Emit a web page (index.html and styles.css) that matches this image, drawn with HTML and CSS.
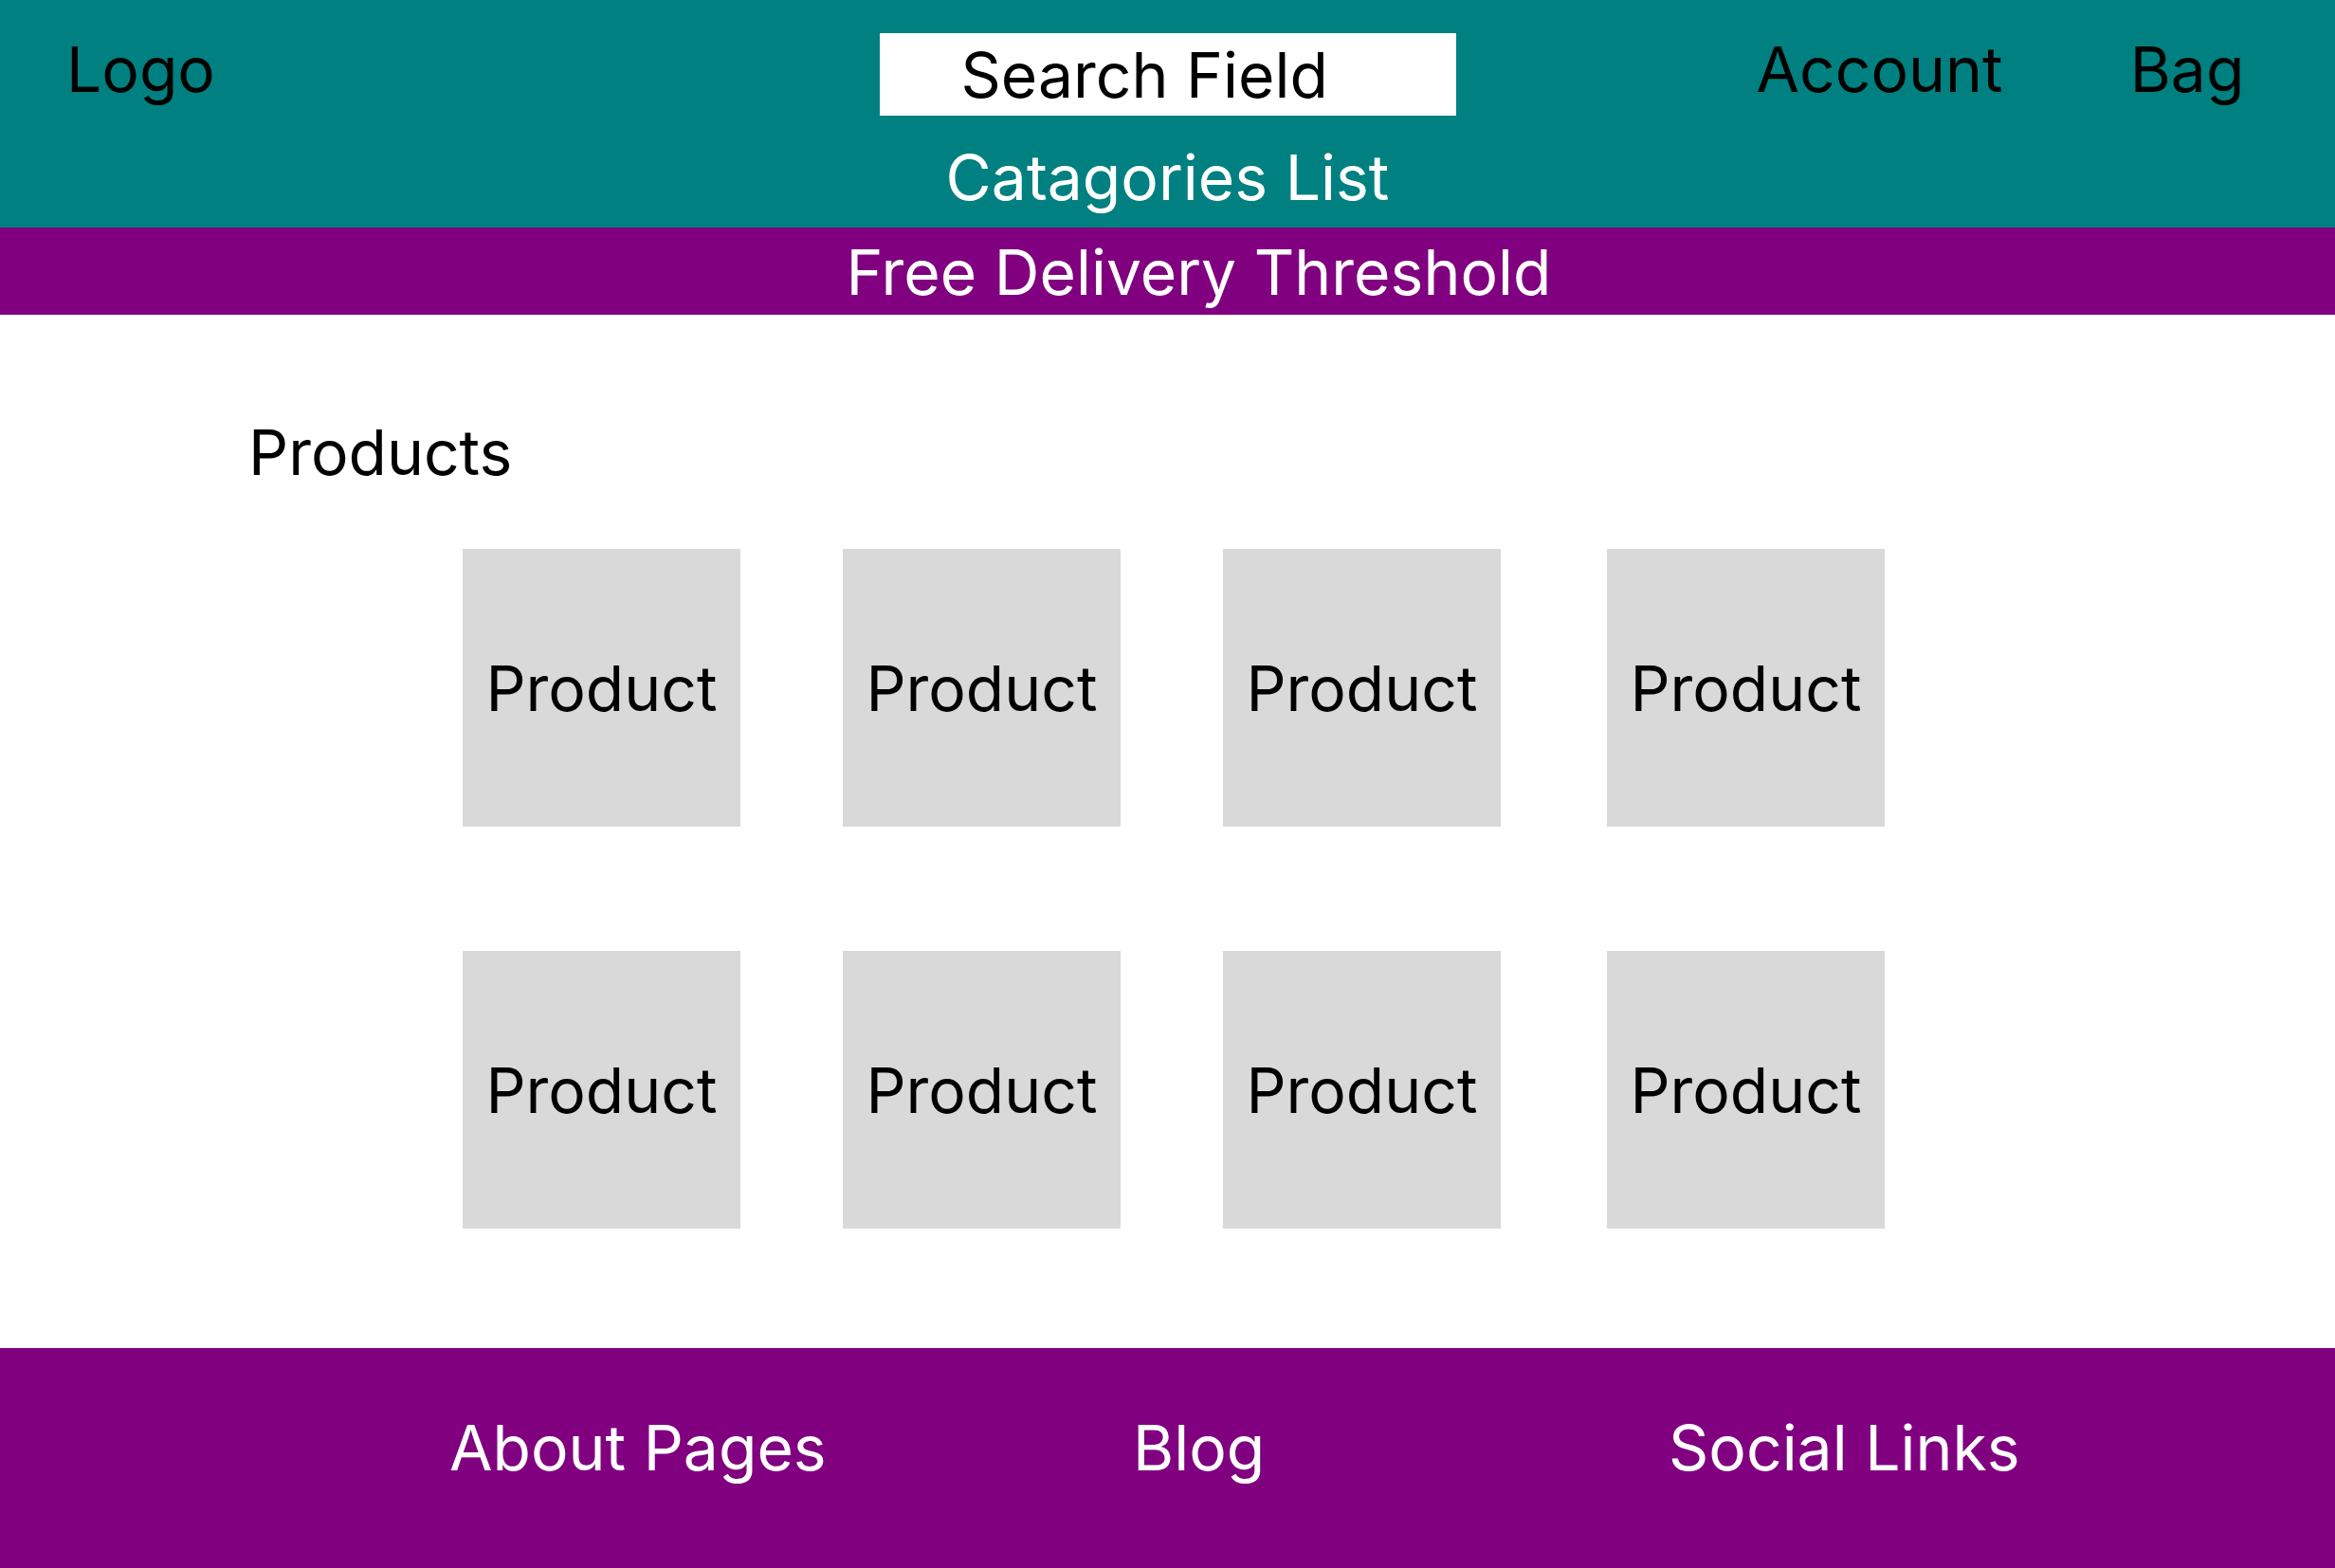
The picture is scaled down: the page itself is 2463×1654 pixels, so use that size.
FILE: index.html
```html
<!DOCTYPE html>
<html lang="en">
<head>
<meta charset="utf-8">
<title>Shop Wireframe</title>
<link rel="stylesheet" href="styles.css">
</head>
<body>
<header class="header">
  <div class="top-row">
    <div class="logo-cell"><span class="logo">Logo</span></div>
    <div class="search">Search Field</div>
    <nav class="user-nav">
      <span class="account">Account</span>
      <span class="bag">Bag</span>
    </nav>
  </div>
  <div class="categories">Catagories List</div>
</header>
<div class="delivery">Free Delivery Threshold</div>
<main class="main">
  <h1 class="products-title">Products</h1>
  <section class="grid">
    <div class="product">Product</div>
    <div class="product">Product</div>
    <div class="product">Product</div>
    <div class="product">Product</div>
    <div class="product">Product</div>
    <div class="product">Product</div>
    <div class="product">Product</div>
    <div class="product">Product</div>
  </section>
</main>
<footer class="footer">
  <span class="foot-link">About Pages</span>
  <span class="foot-link">Blog</span>
  <span class="foot-link">Social Links</span>
</footer>
</body>
</html>
```

FILE: styles.css
```css
* { box-sizing: border-box; }
html, body { margin: 0; padding: 0; }
body {
  width: 2463px;
  height: 1654px;
  overflow: hidden;
  font-family: "Inter", "Noto Sans", sans-serif;
  font-size: 66px;
  line-height: 66px;
  color: #000;
  background: #fff;
}
.header {
  height: 240px;
  background: #008080;
  padding-top: 35px;
}
.top-row {
  display: grid;
  grid-template-columns: 1fr 608px 1fr;
  align-items: start;
}
.logo-cell { padding-left: 70px; padding-top: 5px; }
.search {
  height: 87px;
  background: #fff;
  padding-top: 11px;
  padding-left: 86px;
}
.user-nav {
  display: flex;
  padding-left: 317px;
  padding-top: 5px;
}
.bag { margin-left: 134px; }
.categories {
  margin-top: 32px;
  text-align: center;
  color: #fff;
}
.delivery {
  height: 92px;
  background: #800080;
  color: #fff;
  text-align: center;
  padding-top: 14px;
  padding-left: 66px;
}
.main {
  height: 1090px;
  padding-top: 112px;
}
.products-title {
  margin: 0 0 69px 0;
  padding-left: 262px;
  font-size: 66px;
  font-weight: 400;
  line-height: 66px;
}
.grid {
  display: grid;
  grid-template-columns: 293px 293px 293px 297px;
  grid-auto-rows: 293px;
  column-gap: 108px;
  row-gap: 131px;
  padding-left: 488px;
}
.product {
  width: 293px;
  background: #d9d9d9;
  display: flex;
  align-items: center;
  justify-content: center;
}
.product:nth-child(4n) { justify-self: end; }
.footer {
  height: 232px;
  background: #800080;
  color: #fff;
  display: grid;
  grid-template-columns: 721px 565px auto;
  padding-left: 474px;
  padding-top: 72px;
}
```
